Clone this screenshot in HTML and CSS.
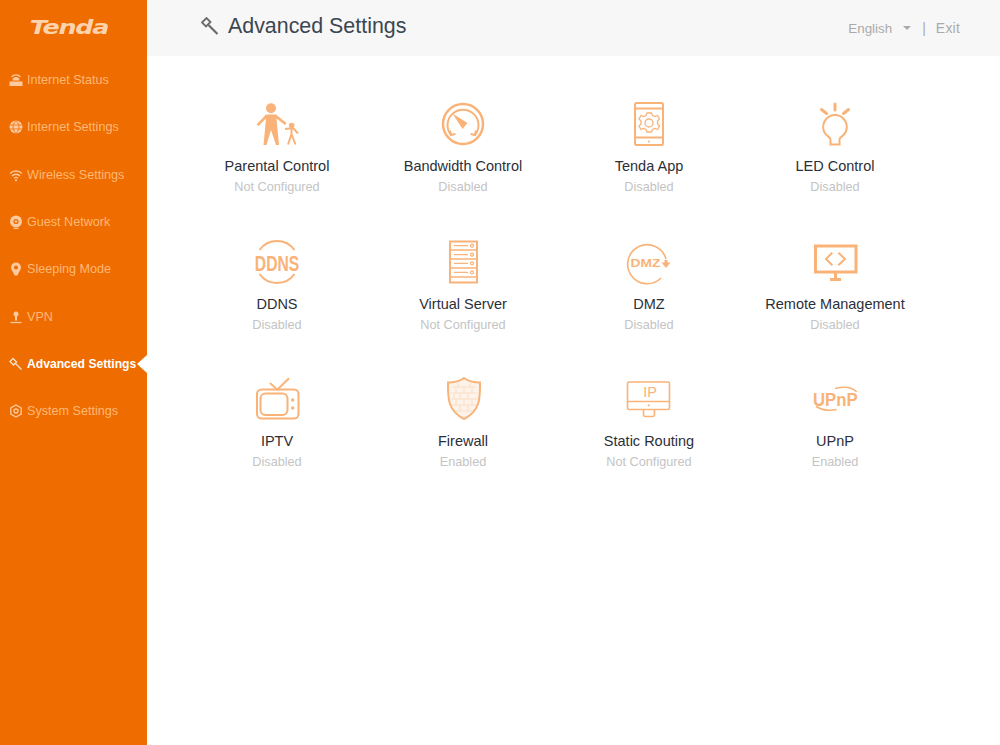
FILE: index.html
```html
<!DOCTYPE html>
<html lang="en">
<head>
<meta charset="utf-8">
<title>Advanced Settings</title>
<link rel="stylesheet" href="styles.css">
</head>
<body>
<div class="app">
  <aside class="sidebar">
    <div class="logo"><span class="logo-text">Tenda</span></div>
    <nav class="menu">
      <a class="menu-item"><svg class="mi" viewBox="0 0 14 14"><path class="fill" d="M.5 8.500h13v4.500H.5zM3.500 7.500a3.500 3.500 0 0 1 7 0z"/><path class="ln" d="M2.500 4a6 6 0 0 1 9 0"/></svg><span>Internet Status</span></a>
      <a class="menu-item"><svg class="mi" viewBox="0 0 14 14"><circle class="fill" cx="7" cy="7" r="6.500"/><path class="cut" d="M.5 5h13M.5 9h13M7 .5c-4 4-4 9 0 13M7 .5c4 4 4 9 0 13"/></svg><span>Internet Settings</span></a>
      <a class="menu-item"><svg class="mi" viewBox="0 0 14 14"><path class="ln" d="M1 5.500a8.500 8.500 0 0 1 12 0M3 8a5.500 5.500 0 0 1 8 0M5 10.300a2.800 2.800 0 0 1 4 0"/><circle class="fill" cx="7" cy="12.300" r="1.100"/></svg><span>Wireless Settings</span></a>
      <a class="menu-item"><svg class="mi" viewBox="0 0 14 14"><circle class="fill" cx="7" cy="6.500" r="6"/><circle class="hole" cx="7" cy="6.500" r="2.600"/><circle class="fill" cx="7" cy="6.500" r="1.200"/><path class="ln" d="M4.500 13.500h5"/></svg><span>Guest Network</span></a>
      <a class="menu-item"><svg class="mi" viewBox="0 0 14 14"><path class="fill" d="M7 .5a5 5 0 0 1 5 5c0 3-3 5-3.500 8h-3C5 10.500 2 8.500 2 5.500a5 5 0 0 1 5-5z"/><circle class="hole" cx="7" cy="5.500" r="2"/></svg><span>Sleeping Mode</span></a>
      <a class="menu-item"><svg class="mi" viewBox="0 0 14 14"><circle class="fill" cx="7" cy="4" r="2.500"/><path class="fill" d="M6 5h2v5.500H6z"/><path class="ln" d="M1.500 12.500h11"/></svg><span>VPN</span></a>
      <a class="menu-item active"><svg class="mi" viewBox="0 0 14 14"><path class="ln wr" d="M6.500 6.500l6 6"/><path class="ln" d="M1 4.500l3-3 3.500 3.500-3 3z"/></svg><span>Advanced Settings</span></a>
      <a class="menu-item"><svg class="mi" viewBox="0 0 14 14"><path class="ln" d="M7 1l5.200 3v6L7 13l-5.200-3V4z"/><circle class="ln" cx="7" cy="7" r="2"/></svg><span>System Settings</span></a>
    </nav>
  </aside>
  <main class="main">
    <header class="topbar">
      <div class="title">
        <svg class="title-icon" viewBox="0 0 18 18"><path d="M7.500 8l9 9" class="wrench-handle"/><path d="M1 5.500L5.500 1l4 4-4.500 4.500z" class="wrench-head"/></svg>
        <h1>Advanced Settings</h1>
      </div>
      <div class="top-actions">
        <span class="lang">English</span><span class="caret"></span><span class="sep">|</span><span class="exit">Exit</span>
      </div>
    </header>
    <section class="grid">
      <div class="tile">
        <svg class="ico" viewBox="0 0 50 50"><circle class="f" cx="19" cy="9.300" r="5"/><path class="f" d="M14 15.500h10l10.500 8.500-1.500 2-8.500-6.500 2.500 26.500h-3L19 31l-4.500 15h-3L14 19.500l-7.500 7.500L4.500 25.500z"/><circle class="f" cx="39.700" cy="26.500" r="2.800"/><path class="s2" d="M33 30l4.500-.5h4l4.500 5M39.500 30v5l-3.500 10.500M39.500 35l4 10.500"/></svg>
        <div class="name">Parental Control</div><div class="state">Not Configured</div>
      </div>
      <div class="tile">
        <svg class="ico" viewBox="0 0 50 50"><circle class="sb" cx="25" cy="25" r="20"/><path class="s" d="M13 36a15.500 15.500 0 1 1 24 0M12 31.500l1 4.500 4.500-1M38 31.500l-1 4.500-4.500-1"/><path class="f" d="M14.500 14.500l15 9.500-5 6z"/></svg>
        <div class="name">Bandwidth Control</div><div class="state">Disabled</div>
      </div>
      <div class="tile">
        <svg class="ico" viewBox="0 0 50 50"><rect class="s" x="11" y="4" width="28" height="42" rx="1.500"/><path class="s" d="M11 9.500h28M11 38.500h28"/><circle class="f" cx="25" cy="42.500" r="1"/><path class="s1" d="M22.500 14h4.500l1 2.500 2.500 1 2.500-1 2 3.500-2 2v3l2 2-2 3.500-2.500-1-2.500 1-1 2.500h-4.500l-1-2.500-2.500-1-2.500 1-2-3.500 2-2v-3l-2-2 2-3.500 2.500 1 2.500-1z" transform="translate(.500 0)"/><circle class="s1" cx="25" cy="24" r="4"/></svg>
        <div class="name">Tenda App</div><div class="state">Disabled</div>
      </div>
      <div class="tile">
        <svg class="ico" viewBox="0 0 50 50"><path class="s3" d="M25 5v6M11.500 10.500l5 4M38.500 10.500l-5 4"/><path class="s" d="M20.500 45.500v-5c0-2-2-2.500-4-4.500a11.800 11.800 0 1 1 17 0c-2 2-4 2.500-4 4.500v5z"/></svg>
        <div class="name">LED Control</div><div class="state">Disabled</div>
      </div>

      <div class="tile">
        <svg class="ico" viewBox="0 0 50 50"><path class="s" d="M7.500 13a21.500 21.500 0 0 1 35 0M7.500 37a21.500 21.500 0 0 0 35 0"/><text class="ddns" transform="translate(25 33.500) scale(.92 1.270)" text-anchor="middle">DDNS</text></svg>
        <div class="name">DDNS</div><div class="state">Disabled</div>
      </div>
      <div class="tile">
        <svg class="ico" viewBox="0 0 50 50"><rect class="s" x="12" y="4.500" width="27" height="41"/><path class="s1" d="M12 13h27M12 22h27M12 31h27M12 40h27M16 8.700h14M16 17.700h14M16 26.300h14M16 35.300h14"/><circle class="s1" cx="34" cy="8.700" r="1.500"/><circle class="s1" cx="34" cy="17.700" r="1.500"/><circle class="s1" cx="34" cy="26.300" r="1.500"/><circle class="s1" cx="34" cy="35.300" r="1.500"/></svg>
        <div class="name">Virtual Server</div><div class="state">Not Configured</div>
      </div>
      <div class="tile">
        <svg class="ico" viewBox="0 0 50 50"><path class="s1h" d="M42 22A19.500 19.500 0 1 0 37 41"/><path class="f" d="M40.500 23h3v2.500h3l-4.500 5.500-4.500-5.500h3z"/><text class="dmz" transform="translate(21.500 30) scale(1.380 1)" text-anchor="middle">DMZ</text></svg>
        <div class="name">DMZ</div><div class="state">Disabled</div>
      </div>
      <div class="tile">
        <svg class="ico" viewBox="0 0 50 50"><rect class="s3b" x="5.500" y="9" width="40.500" height="26"/><path class="s" d="M22.300 15.700L16 22l6.300 6.300M28.300 15.700L35 22l-6.700 6.300"/><path class="s3b" d="M25.500 35v7M20 42.500h11"/></svg>
        <div class="name">Remote Management</div><div class="state">Disabled</div>
      </div>

      <div class="tile">
        <svg class="ico" viewBox="0 0 50 50"><path class="s" d="M18 9l7.300 6.700L37 4.300"/><rect class="s" x="5" y="15.500" width="41.500" height="29" rx="4.500"/><rect class="s" x="8.500" y="19.500" width="27" height="21.500" rx="5"/><circle class="f" cx="40.700" cy="26" r="1.700"/><circle class="f" cx="40.700" cy="34" r="1.700"/></svg>
        <div class="name">IPTV</div><div class="state">Disabled</div>
      </div>
      <div class="tile">
        <svg class="ico" viewBox="0 0 50 50"><path class="shield" d="M26 4c4 3 10 4.500 16 4.500 0 14 1 28-16 36.500C9 36.500 10 22.500 10 8.500 16 8.500 22 7 26 4z"/><path class="bricks" d="M14 13h24M13 19h26M13 25h26M14 31h24M17 37h18M20 9v4M32 9v4M26 13v6M18 13v6M34 13v6M22 19v6M30 19v6M16 19v6M26 25v6M18 25v6M34 25v6M22 31v6M30 31v6"/></svg>
        <div class="name">Firewall</div><div class="state">Enabled</div>
      </div>
      <div class="tile">
        <svg class="ico" viewBox="0 0 50 50"><rect class="s1h" x="3.500" y="8" width="42" height="27.500" rx="1.500"/><path class="s1h" d="M3.500 27.500h42M19.500 35.500v5a2 2 0 0 0 2 2h7a2 2 0 0 0 2-2v-5"/><circle class="f" cx="24.700" cy="31.300" r="1.100"/><text class="ip" x="26" y="23" text-anchor="middle">IP</text></svg>
        <div class="name">Static Routing</div><div class="state">Not Configured</div>
      </div>
      <div class="tile">
        <svg class="ico" viewBox="0 0 50 50"><path class="s1h" d="M25 14.500c8-2 17-1.500 21.700 3.500M6 32.500c6 3.500 14 4.500 20.500 3"/><text class="upnp" transform="translate(25.300 32) scale(.93 1)" text-anchor="middle">UPnP</text></svg>
        <div class="name">UPnP</div><div class="state">Enabled</div>
      </div>
    </section>
  </main>
</div>
</body>
</html>
```
FILE: styles.css
```css
html, body { margin: 0; padding: 0; height: 100%; background: #fff; }
body { font-family: "Liberation Sans", Arial, sans-serif; }
.app { display: flex; height: 745px; overflow: hidden; }

.sidebar { width: 147px; flex: none; background: #ee6c00; position: relative; }
.logo { height: 56.4px; display: flex; align-items: center; justify-content: center; box-sizing: border-box; padding: 0 10px 2px 0; }
.logo-text { font-family: "DejaVu Sans", sans-serif; font-weight: 700; font-style: italic; font-size: 20px; letter-spacing: -1px; color: #fcd3ac; transform: scaleX(1.270); }
.menu { display: flex; flex-direction: column; }
.menu-item { height: 47.35px; display: flex; align-items: center; padding-left: 9px; gap: 4px; font-size: 12.6px; color: #ffb874; white-space: nowrap; position: relative; }
.menu-item.active { color: #fff; font-weight: 700; font-size: 12.150px; }
.menu-item.active::after { content: ""; position: absolute; right: 0; top: 50%; margin-top: -9px; border-style: solid; border-width: 9px 10px 9px 0; border-color: transparent #fff transparent transparent; }
.mi { width: 14px; height: 14px; flex: none; }
.mi .fill { fill: #fdcaa0; stroke: none; }
.mi .ln { fill: none; stroke: #fdcaa0; stroke-width: 1.300; }
.mi .cut { fill: none; stroke: #ee6c00; stroke-width: .8; }
.mi .hole { fill: #ee6c00; }
.active .mi .ln { stroke: #fde3cc; }

.main { flex: 1; min-width: 0; display: flex; flex-direction: column; }
.topbar { height: 56px; flex: none; background: #f7f7f7; display: flex; align-items: center; justify-content: space-between; padding: 0 40px 4px 54px; box-sizing: border-box; }
.title { display: flex; align-items: center; gap: 9px; }
.title-icon { width: 18px; height: 18px; }
.wrench-handle { fill: none; stroke: #6b6b6b; stroke-width: 2.200; }
.wrench-head { fill: none; stroke: #6b6b6b; stroke-width: 1.800; }
.title h1 { margin: 0; font-weight: 400; font-size: 21.400px; color: #3c4650; }
.top-actions { display: flex; align-items: center; font-size: 14px; color: #aaa; padding-top: 4px; }
.lang { font-size: 13.400px; }
.caret { margin-left: 11px; border-style: solid; border-width: 4px 4px 0 4px; border-color: #aaa transparent transparent transparent; }
.sep { margin: 0 10px 0 11px; }
.exit { letter-spacing: .2px; }

.grid { display: grid; grid-template-columns: repeat(4, 186px); row-gap: 39.850px; padding: 43px 0 0 37px; }
.tile { display: flex; flex-direction: column; align-items: center; }
.ico { width: 50px; height: 50px; margin-bottom: 7px; }
.name { height: 20.900px; line-height: 20px; font-size: 14.500px; color: #2c2f38; white-space: nowrap; }
.state { height: 20px; line-height: 20px; font-size: 12.700px; color: #c4c4c4; white-space: nowrap; }

.ico .f { fill: #f9b378; stroke: none; }
.ico .s { fill: none; stroke: #f9b378; stroke-width: 2; }
.ico .sb { fill: none; stroke: #f9b378; stroke-width: 2.500; }
.ico .s1 { fill: none; stroke: #f9b378; stroke-width: 1.300; }
.ico .s1h { fill: none; stroke: #f9b378; stroke-width: 1.600; }
.ico .s2 { fill: none; stroke: #f9b378; stroke-width: 2; }
.ico .s3 { fill: none; stroke: #f9b378; stroke-width: 3; stroke-linecap: round; }
.ico .s3b { fill: none; stroke: #f9b378; stroke-width: 3; }
.ico .shield { fill: #fdf3ea; stroke: #f9b378; stroke-width: 2; }
.ico .bricks { fill: none; stroke: #fbdcc0; stroke-width: .9; }
.ico text { fill: #f9b378; font-family: "Liberation Sans", sans-serif; }
.ico .ddns { font-size: 17px; font-weight: 700; }
.ico .dmz { font-size: 10px; font-weight: 700; }
.ico .ip { font-size: 14.500px; }
.ico .upnp { font-size: 18px; font-weight: 700; }
```
